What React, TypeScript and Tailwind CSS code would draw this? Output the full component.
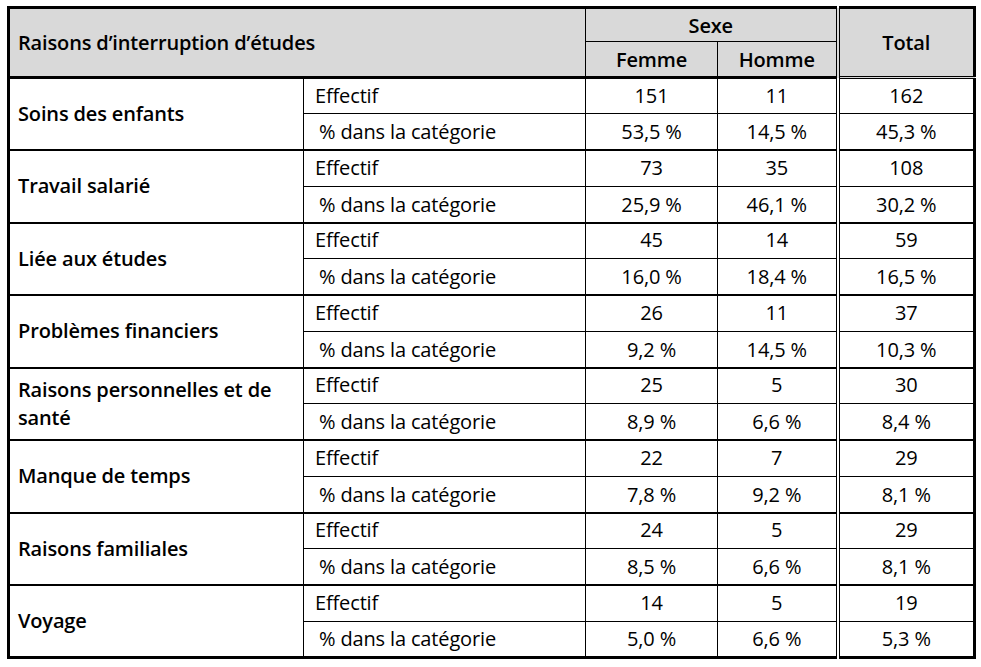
import React from "react";

type Group = { label: string; eff: [string, string, string]; pct: [string, string, string] };

const groups: Group[] = [
  { label: "Soins des enfants", eff: ["151", "11", "162"], pct: ["53,5 %", "14,5 %", "45,3 %"] },
  { label: "Travail salarié", eff: ["73", "35", "108"], pct: ["25,9 %", "46,1 %", "30,2 %"] },
  { label: "Liée aux études", eff: ["45", "14", "59"], pct: ["16,0 %", "18,4 %", "16,5 %"] },
  { label: "Problèmes financiers", eff: ["26", "11", "37"], pct: ["9,2 %", "14,5 %", "10,3 %"] },
  { label: "Raisons personnelles et de santé", eff: ["25", "5", "30"], pct: ["8,9 %", "6,6 %", "8,4 %"] },
  { label: "Manque de temps", eff: ["22", "7", "29"], pct: ["7,8 %", "9,2 %", "8,1 %"] },
  { label: "Raisons familiales", eff: ["24", "5", "29"], pct: ["8,5 %", "6,6 %", "8,1 %"] },
  { label: "Voyage", eff: ["14", "5", "19"], pct: ["5,0 %", "6,6 %", "5,3 %"] },
];

export default function App() {
  return (
    <div className="w-[981px] h-[667px] bg-white pt-[6px] pl-[7px] text-black" style={{ fontFamily: "'Open Sans', Lato, sans-serif" }}>
      <table className="table-fixed border-collapse border-[3px] border-black w-[966px] text-[20px] leading-[26px] tracking-[-0.15px]">
        <colgroup>
          <col className="w-[295px]" />
          <col className="w-[282px]" />
          <col className="w-[132px]" />
          <col className="w-[120px]" />
          <col className="w-[137px]" />
        </colgroup>
        <thead>
          <tr className="bg-[#d9d9d9] h-[34px]">
            <th colSpan={2} rowSpan={2} className="text-left font-semibold pl-[8px] border-b-[3px] border-black">
              Raisons d’interruption d’études
            </th>
            <th colSpan={2} className="font-semibold border border-black text-center pt-[1px]">Sexe</th>
            <th rowSpan={2} className="font-semibold border-l-4 border-double border-l-black border-b-[3px] border-b-black text-center">Total</th>
          </tr>
          <tr className="bg-[#d9d9d9] h-[36px]">
            <th className="font-semibold border border-black border-b-[3px] text-center pt-[2px]">Femme</th>
            <th className="font-semibold border border-black border-b-[3px] text-center pt-[2px]">Homme</th>
          </tr>
        </thead>
        <tbody>
          {groups.map((g, i) => (
            <React.Fragment key={g.label}>
              <tr className={`h-[36px] ${i > 0 ? "border-t-2 border-black" : ""}`}>
                <td rowSpan={2} className="font-semibold pl-[8px] pr-[14px] align-middle border-r border-black leading-[28px]">
                  {g.label}
                </td>
                <td className="pl-[11px] border-r border-b border-black pb-[1px]">Effectif</td>
                <td className="text-center border-r border-b border-black pb-[1px]">{g.eff[0]}</td>
                <td className="text-center border-b border-black pb-[1px]">{g.eff[1]}</td>
                <td className="text-center border-l-4 border-double border-l-black border-b border-b-black pb-[1px]">{g.eff[2]}</td>
              </tr>
              <tr className="h-[36.5px]">
                <td className="pl-[15px] border-r border-black pt-[1px]">% dans la catégorie</td>
                <td className="text-center border-r border-black pt-[1px]">{g.pct[0]}</td>
                <td className="text-center pt-[1px]">{g.pct[1]}</td>
                <td className="text-center border-l-4 border-double border-l-black pt-[1px]">{g.pct[2]}</td>
              </tr>
            </React.Fragment>
          ))}
        </tbody>
      </table>
    </div>
  );
}
